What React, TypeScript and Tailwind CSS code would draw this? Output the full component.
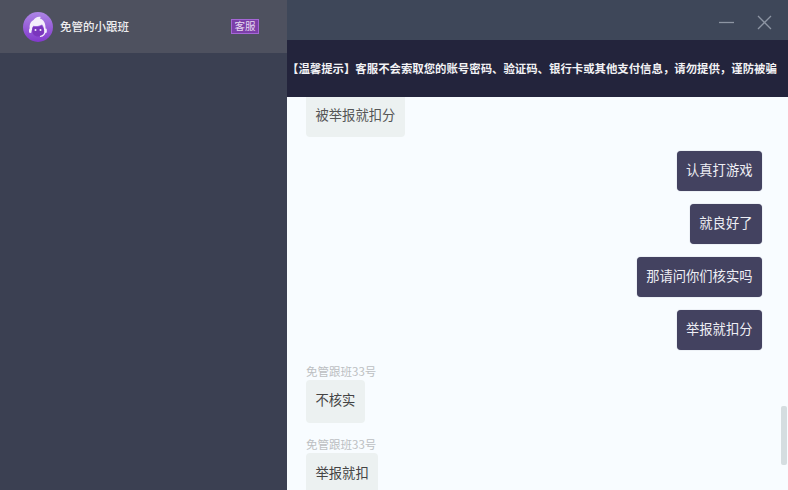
const font = { fontFamily: '"Noto Sans CJK SC", "Liberation Sans", sans-serif' };

function Avatar() {
  return (
    <svg width="30" height="30" viewBox="0 0 30 30" className="shrink-0">
      <defs>
        <linearGradient id="av" x1="0" y1="0" x2="0" y2="1">
          <stop offset="0" stopColor="#ad86e6" />
          <stop offset="1" stopColor="#8238cc" />
        </linearGradient>
      </defs>
      <circle cx="15" cy="15" r="15" fill="url(#av)" />
      <path d="M7 18c-1.200-5 .5-8.500 3.500-10C12 5.500 15 4 18 5c-.8.500-1 1-1 1.500 3.500.8 6 4.500 5.500 11.500l-1.500.5c0-2.500-.5-4.500-2-6-3 1.500-6 1.800-8.500 1.200-1 1.300-1.500 3-1.500 4.800z" fill="#f4eefb" />
      <path d="M10 14.700c2.500.6 5.500.3 8.500-1.200 1.500 1.500 2.500 3 2.500 5.500 0 3-2.800 5.500-6 5.500s-5.800-2.500-5.800-5.500c0-1.800.2-3.300.8-4.300z" fill="#7a35bd" />
      <circle cx="12.500" cy="18" r="1" fill="#f4eefb" />
      <circle cx="17.500" cy="18" r="1" fill="#f4eefb" />
      <path d="M22.200 19c0 3-2 5-5.200 5.500" stroke="#f4eefb" strokeWidth="1.200" fill="none" />
      <rect x="6" y="16.500" width="2.500" height="4.500" rx="1.200" fill="#f4eefb" />
      <rect x="21.300" y="16.500" width="2.500" height="4.500" rx="1.200" fill="#f4eefb" />
    </svg>
  );
}

function MineBubble({ text }: { text: string }) {
  return (
    <div className="flex justify-end pr-[26px]">
      <div className="h-10 flex items-center px-[9.5px] pb-[2px] rounded-[4px] bg-[#434260] text-[#eeeef4] text-[13.3px] shadow-[0_0_1px_#8a8aa0]">
        {text}
      </div>
    </div>
  );
}

function TheirBubble({ text }: { text: string }) {
  return (
    <div className="h-[43px] w-fit flex items-center px-[9.5px] pb-[3px] rounded-[4px] bg-[#ecf1f1] text-[#444] text-[13.3px]">
      {text}
    </div>
  );
}

export default function App() {
  return (
    <div className="flex w-[788px] h-[490px] overflow-hidden" style={font}>
      {/* session list */}
      <aside className="w-[287px] shrink-0 bg-[#3b4052]">
        <div className="h-[53px] flex items-center pl-[23px] pr-[28px] bg-[#4e515f]">
          <Avatar />
          <span className="ml-[7px] flex-1 text-[11.5px] font-medium text-[#eeeef0]">免管的小跟班</span>
          <span className="w-[28px] h-[15px] flex items-center justify-center bg-[#7b3fa8] border border-[#a566d6] text-[10.5px] leading-none text-[#e6d8f0]">
            客服
          </span>
        </div>
      </aside>

      <main className="relative flex-1 flex flex-col min-w-0 bg-[#f8fcff]">
        <header className="h-10 shrink-0 flex items-center justify-end bg-[#3e4759]">
          <svg width="80" height="40" viewBox="0 0 80 40" className="mr-[2px]">
            <path d="M13 22.500h15" stroke="#8d95a3" strokeWidth="1.300" />
            <path d="M52 16l13 13M65 16L52 29" stroke="#8d95a3" strokeWidth="1.300" />
          </svg>
        </header>
        <div className="h-[57px] shrink-0 flex items-center overflow-hidden whitespace-nowrap bg-[#23243c] text-[11.4px] font-bold text-[#f2f2f5]">
          【温馨提示】客服不会索取您的账号密码、验证码、银行卡或其他支付信息，请勿提供，谨防被骗
        </div>

        <div className="flex-1 overflow-hidden">
          <div className="pl-[19px]">
            <div className="h-10 w-fit flex items-center px-[9.5px] pb-[4px] rounded-b-[4px] bg-[#ecf1f1] text-[#555] text-[13.3px]">
              被举报就扣分
            </div>
          </div>
          <div className="mt-[14px] flex flex-col gap-[13px]">
            <MineBubble text="认真打游戏" />
            <MineBubble text="就良好了" />
            <MineBubble text="那请问你们核实吗" />
            <MineBubble text="举报就扣分" />
          </div>
          <div className="pl-[19px] mt-[13px] flex flex-col">
            <div className="h-[17px] text-[11.5px] leading-[17px] text-[#bcbfc2]">免管跟班33号</div>
            <TheirBubble text="不核实" />
            <div className="mt-[13px] h-[17px] text-[11.5px] leading-[17px] text-[#bcbfc2]">免管跟班33号</div>
            <TheirBubble text="举报就扣" />
          </div>
        </div>

        {/* scrollbar thumb */}
        <div className="absolute right-[1px] top-[406px] w-[6px] h-[59px] rounded-[2px] bg-[#d5dde0]" />
      </main>
    </div>
  );
}
